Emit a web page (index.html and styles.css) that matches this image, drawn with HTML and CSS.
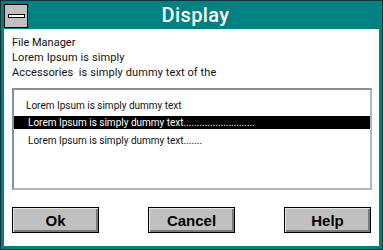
FILE: index.html
```html
<!DOCTYPE html>
<html lang="en">
<head>
  <meta charset="UTF-8">
  <title>Display</title>
  <link rel="stylesheet" href="styles.css">
</head>
<body>

<div class="window">
  <div class="titlebar">
    <div class="sysmenu"><span class="dash"></span></div>
    <div class="title">Display</div>
  </div>

  <div class="content">
    <div class="info">
      <p>File Manager</p>
      <p>Lorem Ipsum is simply</p>
      <p>Accessories&nbsp; is simply dummy text of the</p>
    </div>

    <ul class="listbox">
      <li class="item first">Lorem Ipsum is simply dummy text</li>
      <li class="item selected">Lorem Ipsum is simply dummy text...........................</li>
      <li class="item">Lorem Ipsum is simply dummy text.......</li>
    </ul>

    <div class="buttons">
      <button type="button">Ok</button>
      <button type="button">Cancel</button>
      <button type="button">Help</button>
    </div>
  </div>
</div>

</body>
</html>
```

FILE: styles.css
```css
    body {
      margin: 0;
      font-family: Roboto, "Liberation Sans", sans-serif;
    }
    .window {
      width: 383px;
      height: 250px;
      box-sizing: border-box;
      background: #008080;
      border: 1px solid #0f3434;
      padding: 0 3px 3px 3px;
      display: flex;
      flex-direction: column;
    }
    .titlebar {
      height: 28px;
      display: flex;
      align-items: center;
    }
    .sysmenu {
      width: 22px;
      height: 22px;
      margin-top: 1px;
      background: #c0c0c0;
      border: 1px solid #000;
      display: flex;
      align-items: center;
      justify-content: center;
    }
    .dash {
      width: 15px;
      height: 2px;
      background: #fff;
      border: 1px solid #000;
    }
    .title {
      flex: 1;
      text-align: center;
      color: #fff;
      font-weight: 500;
      font-size: 20px;
      letter-spacing: 0.4px;
      padding-right: 16px;
    }
    .content {
      flex: 1;
      background: #fff;
      padding: 6px 7px 0 8px;
    }
    .info p {
      margin: 0;
      font-size: 11px;
      line-height: 15px;
      color: #111;
    }
    .info p + p {
      letter-spacing: 0.1px;
    }
    .listbox {
      list-style: none;
      margin: 8px 0 0 0;
      padding: 9px 0 0 0;
      height: 102px;
      box-sizing: border-box;
      border: 2px solid #b4b4b4;
      border-top-color: #909090;
      border-left-color: #909090;
    }
    .item {
      font-size: 10px;
      line-height: 14px;
      padding-left: 14px;
      color: #111;
    }
    .item.first {
      padding-left: 12px;
      margin-bottom: 3px;
    }
    .item.selected {
      background: #000;
      color: #fff;
      line-height: 13px;
      margin-bottom: 5px;
    }
    .buttons {
      display: flex;
      justify-content: space-between;
      margin-top: 17px;
      padding-right: 1px;
    }
    button {
      width: 87px;
      height: 26px;
      background: #c0c0c0;
      border: 1px solid #000;
      box-shadow: inset 1px 1px 0 #e8e8e8, inset -2px -2px 0 #7a7a7a;
      font-family: "Liberation Sans", Arial, sans-serif;
      font-weight: bold;
      font-size: 15px;
      color: #000;
      padding: 0;
    }
```
